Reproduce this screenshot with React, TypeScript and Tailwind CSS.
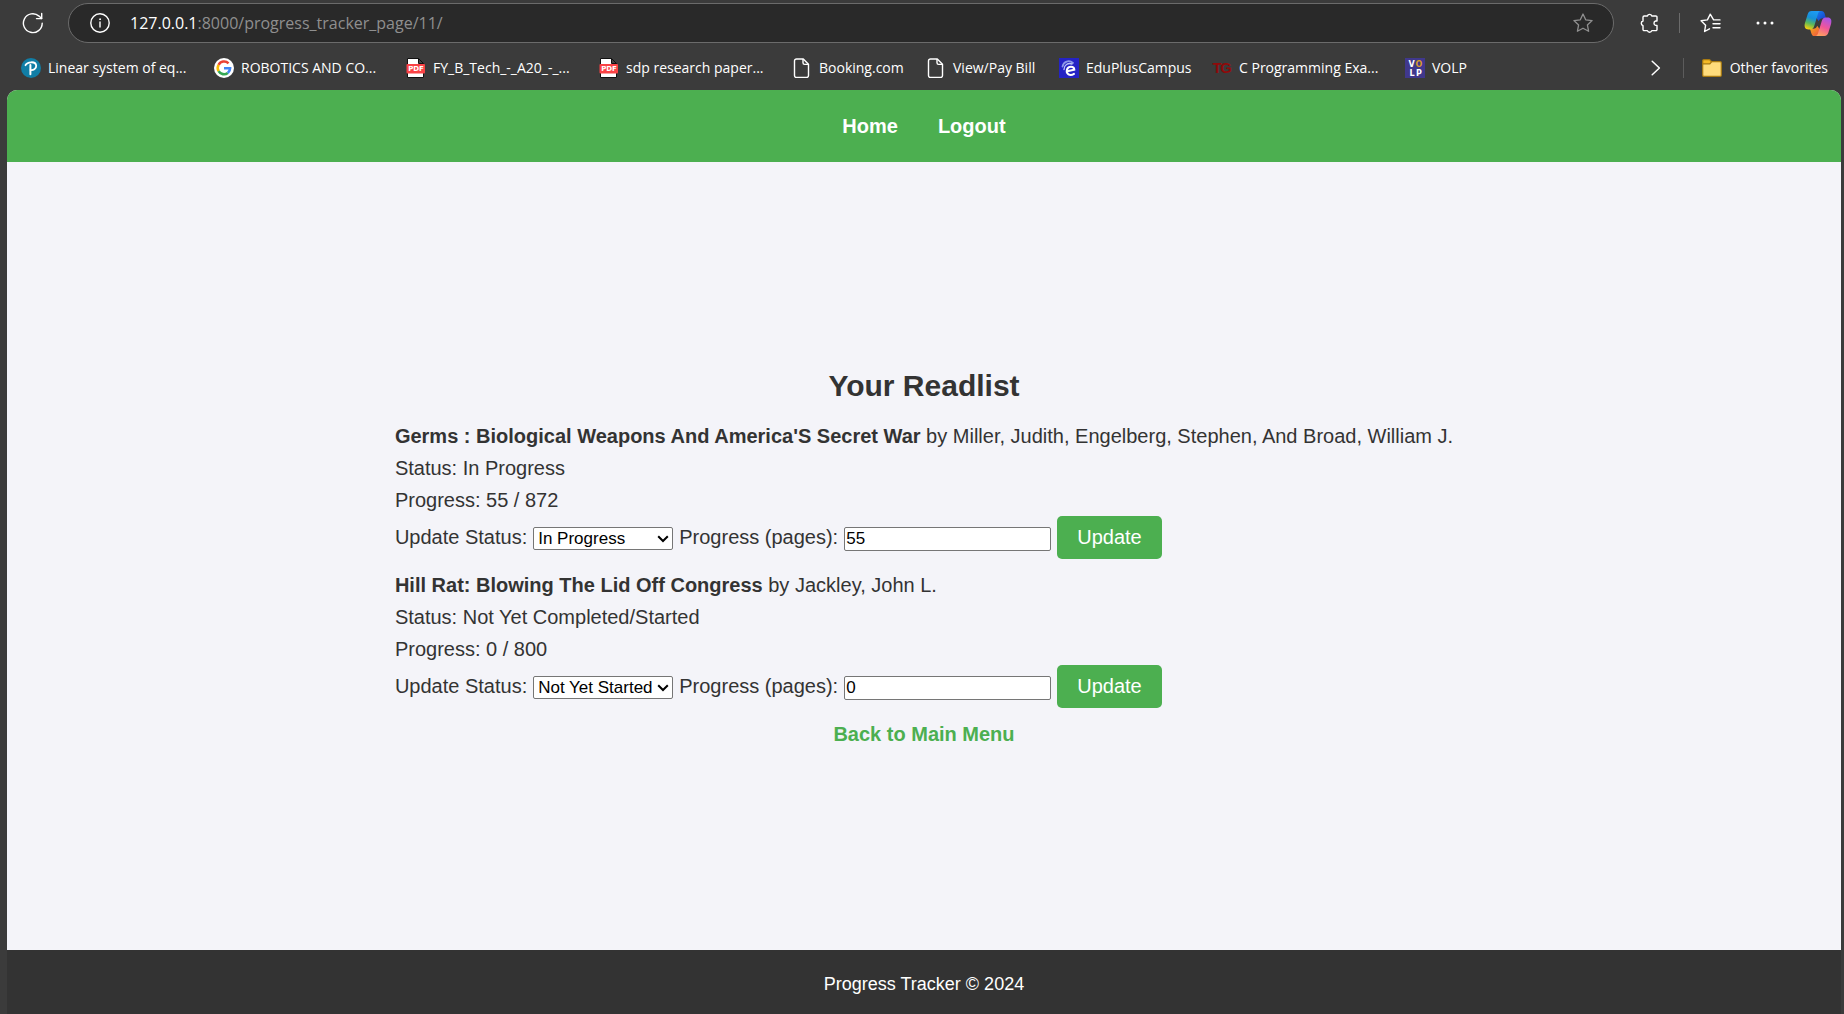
import type { ReactNode } from "react";

function ReloadIcon() {
  return (
    <svg width="22" height="22" viewBox="0 0 22 22" fill="none" stroke="#ffffff" strokeWidth="1.4" strokeLinecap="round" strokeLinejoin="round">
      <path d="M20.2 11.2a9.4 9.4 0 1 1-3.2-7.1l2.6 2.4" />
      <path d="M19.7 1.4v5.2h-5.2" />
    </svg>
  );
}

function InfoIcon() {
  return (
    <svg width="20" height="20" viewBox="0 0 20 20" fill="none" stroke="#ffffff" strokeWidth="1.4" strokeLinecap="round">
      <circle cx="10" cy="10" r="9.2" />
      <path d="M10 9v5" />
      <circle cx="10" cy="6.2" r="0.5" fill="#ffffff" strokeWidth="0.9" />
    </svg>
  );
}

function StarIcon() {
  return (
    <svg width="20" height="20" viewBox="0 0 20 20" fill="none" stroke="#8f8f8f" strokeWidth="1.3" strokeLinejoin="round">
      <path d="M10 1l2.7 5.8 6.4.8-4.7 4.3 1.2 6.4-5.6-3.1-5.6 3.1 1.2-6.4L.9 7.600l6.400-.8z" />
    </svg>
  );
}

function ExtensionsIcon() {
  return (
    <svg width="20" height="20" viewBox="0 0 20 20" fill="none" stroke="#ffffff" strokeWidth="1.4" strokeLinejoin="round">
      <path d="M5.200 3H8.400a2.300 2.300 0 0 1 4.400 0H16.800a1.200 1.200 0 0 1 1.200 1.200V8H16.600a2.300 2.300 0 0 0 0 4.400H18v4a1.200 1.200 0 0 1-1.200 1.200H12.800a2.300 2.300 0 0 1-4.400 0H5.200A1.200 1.200 0 0 1 4 16.400V12.600a2.400 2.400 0 0 1 0-4.600V4.200A1.200 1.200 0 0 1 5.200 3z" />
    </svg>
  );
}

function FavoritesIcon() {
  return (
    <svg width="21" height="20" viewBox="0 0 21 20" fill="none" stroke="#ffffff" strokeWidth="1.4" strokeLinejoin="round" strokeLinecap="round">
      <path d="M20 6.900h-6.400l-3.400-5.700-2.800 5.700-6.300.9 4.500 4.400-1 6.300 4.900-2.700" />
      <path d="M13 10.800h7M13 14.800h7" />
    </svg>
  );
}

function MoreIcon() {
  return (
    <svg width="18" height="4" viewBox="0 0 18 4" fill="#ffffff">
      <circle cx="2" cy="2" r="1.500" />
      <circle cx="9" cy="2" r="1.500" />
      <circle cx="16" cy="2" r="1.500" />
    </svg>
  );
}

function CopilotIcon() {
  return (
    <svg width="28" height="27" viewBox="0 0 28 27">
      <defs>
        <linearGradient id="cpLeft" x1="0.6" y1="0" x2="0.3" y2="1">
          <stop offset="0" stopColor="#1d9bf5" />
          <stop offset="0.4" stopColor="#1790d8" />
          <stop offset="0.7" stopColor="#5cb85a" />
          <stop offset="1" stopColor="#f2cf10" />
        </linearGradient>
        <linearGradient id="cpRight" x1="0.7" y1="0" x2="0.3" y2="1">
          <stop offset="0" stopColor="#a855e8" />
          <stop offset="0.5" stopColor="#f0559a" />
          <stop offset="1" stopColor="#ffa45c" />
        </linearGradient>
        <linearGradient id="cpTop" x1="0" y1="0" x2="1" y2="1">
          <stop offset="0" stopColor="#1487f0" />
          <stop offset="1" stopColor="#1b35c4" />
        </linearGradient>
        <linearGradient id="cpBottom" x1="0" y1="0" x2="1" y2="1">
          <stop offset="0" stopColor="#f5b017" />
          <stop offset="1" stopColor="#ee4b45" />
        </linearGradient>
      </defs>
      <path d="M13 1h4.500c1.800 0 2.600 1 3.100 2.600l1.400 4.700h-3.200c-2.400 0-3.400 1-4 3L11 6z" fill="url(#cpTop)" />
      <path d="M15 26h-4.500c-1.800 0-2.600-1-3.100-2.600L6 18.700h3.200c2.400 0 3.400-1 4-3L17 21z" fill="url(#cpBottom)" />
      <path d="M7.500 1h9.300c-1.800.2-2.500 1.500-3 3.300l-3.400 11.200c-.8 2.500-1.900 3.900-4.200 3.900H4.500C1.100 19.400 0 17 .9 13.300L3.600 4.400C4.300 2.200 5.500 1 7.500 1z" fill="url(#cpLeft)" />
      <path d="M20.500 26h-9.300c1.800-.2 2.500-1.500 3-3.300l3.400-11.200c.8-2.500 1.900-3.900 4.200-3.900h1.700c3.400 0 4.500 2.400 3.600 6.100l-2.700 8.900c-.7 2.200-1.900 3.400-3.900 3.400z" fill="url(#cpRight)" />
    </svg>
  );
}

function PearsonIcon() {
  return (
    <svg width="20" height="20" viewBox="0 0 20 20" fill="none" stroke="#ffffff" strokeLinecap="round">
      <circle cx="10" cy="10" r="10" fill="#117ea6" stroke="none" />
      <path d="M4.500 7.200C6 3.800 14.800 2.600 15.200 7.800c.2 3-3.200 4.800-5.600 4.200" strokeWidth="1.800" />
      <path d="M9.400 7v9.200" strokeWidth="2" />
    </svg>
  );
}

function GoogleIcon() {
  return (
    <svg width="20" height="20" viewBox="0 0 20 20">
      <circle cx="10" cy="10" r="10" fill="#ffffff" />
      <g fill="none" strokeWidth="2.600">
        <path d="M14.500 5.300A6.200 6.200 0 0 0 4.600 6.900" stroke="#ea4335" />
        <path d="M4.600 6.900a6.200 6.200 0 0 0 0 6.200" stroke="#fbbc05" />
        <path d="M4.600 13.100a6.200 6.200 0 0 0 9.200 1.800" stroke="#34a853" />
        <path d="M13.800 14.900a6.200 6.200 0 0 0 2.300-4.700H10" stroke="#4285f4" />
      </g>
    </svg>
  );
}

function PdfIcon() {
  return (
    <svg width="20" height="20" viewBox="0 0 20 20">
      <path d="M1.500.5h11l5 5v14h-16z" fill="#ffffff" stroke="#111111" />
      <path d="M12.500.5v5h5z" fill="#444444" stroke="#111111" />
      <rect x="0.500" y="6" width="18.500" height="9.500" rx="1" fill="#fa4245" />
      <text x="10" y="13.400" textAnchor="middle" fontSize="7" fontWeight="700" fill="#ffffff" className="font-['DejaVu_Sans',sans-serif]">PDF</text>
    </svg>
  );
}

function PageIcon() {
  return (
    <svg width="20" height="20" viewBox="0 0 20 20" fill="none" stroke="#ffffff" strokeWidth="1.400" strokeLinejoin="round">
      <path d="M4.500 1h6.800l5.200 5.200v11.300a2 2 0 0 1-2 2h-10a2 2 0 0 1-2-2V3a2 2 0 0 1 2-2z" />
      <path d="M11 1v3.800a1.600 1.600 0 0 0 1.600 1.600h3.900" />
    </svg>
  );
}

function EduPlusIcon() {
  return (
    <svg width="20" height="20" viewBox="0 0 20 20" fill="none" strokeLinecap="round">
      <rect width="20" height="20" fill="#2523c4" />
      <path d="M3.500 8.500C4.500 3.500 10 1.500 14 5" stroke="#8d98e8" strokeWidth="1.800" />
      <path d="M5 11.500C5 7 9 4.500 13 6" stroke="#b9c3f4" strokeWidth="1.400" />
      <path d="M8.300 13.200l7-1.600C15 8 9.500 7.800 8 11.500c-1.400 4.500 3 6.800 7 4.400" stroke="#ffffff" strokeWidth="2" />
    </svg>
  );
}

function TgIcon() {
  return (
    <svg width="20" height="20" viewBox="0 0 20 20" fontSize="15" fontWeight="700" textAnchor="middle" fill="#8f0a0a" className="font-['Liberation_Sans',sans-serif]">
      <text x="5" y="15">T</text>
      <text x="14" y="15">G</text>
    </svg>
  );
}

function VolpIcon() {
  return (
    <svg width="20" height="20" viewBox="0 0 20 20" fontSize="8" fontWeight="700" textAnchor="middle" className="font-['DejaVu_Sans',sans-serif]">
      <rect width="20" height="20" fill="#40388c" />
      <text x="6.500" y="9" fill="#ffffff">V</text>
      <text x="14" y="9" fill="#d99a2b">O</text>
      <text x="7" y="18" fill="#ffffff">L</text>
      <text x="14" y="18" fill="#ffffff">P</text>
    </svg>
  );
}

function FolderIcon() {
  return (
    <svg width="20" height="18" viewBox="0 0 20 18" strokeLinejoin="round">
      <path d="M.7 5V1.800A1.100 1.100 0 0 1 1.800.7h5.400c.5 0 .8.200 1.100.6l1 1.200v2.500z" fill="#f5b926" stroke="#a87a12" strokeWidth="1.200" />
      <path d="M.7 5h6.500c.5 0 .8-.2 1.100-.6l1-1.200c.2-.4.600-.5 1-.5h7.900a1.100 1.100 0 0 1 1.100 1.100v12.400a1.100 1.100 0 0 1-1.100 1.100H1.800a1.100 1.100 0 0 1-1.100-1.100z" fill="#ffdc7c" stroke="#a87a12" strokeWidth="1.200" />
    </svg>
  );
}

function ChevronRight() {
  return (
    <svg width="10" height="16" viewBox="0 0 10 16" fill="none" stroke="#ffffff" strokeWidth="1.500" strokeLinecap="round" strokeLinejoin="round">
      <path d="M1.200 1.200L8.400 8l-7.200 6.800" />
    </svg>
  );
}

type Favorite = { label: string; width: string; icon: ReactNode };

const favorites: Favorite[] = [
  { label: "Linear system of eq...", width: "w-[193px]", icon: <PearsonIcon /> },
  { label: "ROBOTICS AND CO...", width: "w-[192px]", icon: <GoogleIcon /> },
  { label: "FY_B_Tech_-_A20_-_...", width: "w-[193px]", icon: <PdfIcon /> },
  { label: "sdp research paper...", width: "w-[193px]", icon: <PdfIcon /> },
  { label: "Booking.com", width: "w-[134px]", icon: <PageIcon /> },
  { label: "View/Pay Bill", width: "w-[133px]", icon: <PageIcon /> },
  { label: "EduPlusCampus", width: "w-[153px]", icon: <EduPlusIcon /> },
  { label: "C Programming Exa...", width: "w-[193px]", icon: <TgIcon /> },
  { label: "VOLP", width: "w-[80px]", icon: <VolpIcon /> },
];

function BrowserChrome() {
  return (
    <div className="font-['Open_Sans','Noto_Sans',sans-serif] text-white">
      <div className="flex h-[46px] items-center pr-3 pl-[22px]">
        <button type="button" aria-label="Reload" className="shrink-0">
          <ReloadIcon />
        </button>
        <div className="ml-6 flex h-10 flex-1 items-center rounded-full border border-[#6b6b6b] bg-[#292929] pr-5 pl-[21px]">
          <button type="button" aria-label="Site information">
            <InfoIcon />
          </button>
          <div className="ml-5 flex-1 text-base whitespace-nowrap text-[#8f8f8f]">
            <span className="text-white">127.0.0.1</span>:8000/progress_tracker_page/11/
          </div>
          <button type="button" aria-label="Add to favorites">
            <StarIcon />
          </button>
        </div>
        <button type="button" aria-label="Extensions" className="ml-[25px]">
          <ExtensionsIcon />
        </button>
        <div className="ml-5 h-5 w-px bg-[#6b6b6b]" />
        <button type="button" aria-label="Favorites" className="ml-5">
          <FavoritesIcon />
        </button>
        <button type="button" aria-label="Settings and more" className="ml-[35px] flex h-5 items-center">
          <MoreIcon />
        </button>
        <button type="button" aria-label="Copilot" className="ml-[30px]">
          <CopilotIcon />
        </button>
      </div>
      <div className="flex h-11 items-center pr-4 pl-[21px] text-sm whitespace-nowrap">
        {favorites.map((f) => (
          <a key={f.label} href="#" className={`flex shrink-0 items-center gap-[7px] ${f.width}`}>
            <span className="w-5 shrink-0">{f.icon}</span>
            {f.label}
          </a>
        ))}
        <button type="button" aria-label="More favorites" className="ml-auto">
          <ChevronRight />
        </button>
        <div className="mr-[18px] ml-[22px] h-5 w-px shrink-0 bg-[#5c5c5c]" />
        <button type="button" className="flex items-center gap-2">
          <FolderIcon />
          Other favorites
        </button>
      </div>
    </div>
  );
}

type Book = {
  id: string;
  title: string;
  author: string;
  status: string;
  choice: string;
  read: number;
  total: number;
};

const books: Book[] = [
  {
    id: "germs",
    title: "Germs : Biological Weapons And America'S Secret War",
    author: "Miller, Judith, Engelberg, Stephen, And Broad, William J.",
    status: "In Progress",
    choice: "In Progress",
    read: 55,
    total: 872,
  },
  {
    id: "hill-rat",
    title: "Hill Rat: Blowing The Lid Off Congress",
    author: "Jackley, John L.",
    status: "Not Yet Completed/Started",
    choice: "Not Yet Started",
    read: 0,
    total: 800,
  },
];

function BookEntry({ book }: { book: Book }) {
  return (
    <li className="mb-2.5">
      <p>
        <strong>{book.title}</strong> by {book.author}
      </p>
      <p>Status: {book.status}</p>
      <p>
        Progress: {book.read} / {book.total}
      </p>
      <form className="flex items-center gap-1.5" onSubmit={(e) => e.preventDefault()}>
        <label htmlFor={`${book.id}-status`} className="pb-0.5">
          Update Status:
        </label>
        <div className="relative mt-0.5">
          <select
            id={`${book.id}-status`}
            defaultValue={book.choice}
            className="block h-[23px] w-[140px] appearance-none rounded-[2px] border border-[#767676] bg-white pl-1 text-[17px] leading-5 text-black"
          >
            <option>Not Yet Started</option>
            <option>In Progress</option>
            <option>Completed</option>
          </select>
          <svg className="pointer-events-none absolute top-2 right-1" width="12" height="8" viewBox="0 0 12 8" fill="none" stroke="#000000" strokeWidth="2">
            <path d="M1.200 1.200L6 6l4.800-4.800" />
          </svg>
        </div>
        <label htmlFor={`${book.id}-pages`} className="pb-0.5">
          Progress (pages):
        </label>
        <input
          id={`${book.id}-pages`}
          type="text"
          inputMode="numeric"
          defaultValue={book.read}
          className="mt-0.5 h-6 w-[207px] rounded-[2px] border border-[#767676] bg-white px-px text-[17px] leading-5 text-black"
        />
        <button type="submit" className="h-[43px] rounded-[5px] bg-[#4caf50] px-5 pb-0.5 text-white">
          Update
        </button>
      </form>
    </li>
  );
}

export default function App() {
  return (
    <div className="flex min-h-screen flex-col bg-[#3b3b3b]">
      <BrowserChrome />
      <div className="mr-[3px] ml-[7px] flex flex-1 flex-col overflow-hidden rounded-t-[10px] bg-[#f4f4f9] font-['Liberation_Sans',Arial,sans-serif] text-xl leading-8 text-[#333333]">
        <nav className="flex h-[72px] items-center justify-center gap-10 bg-[#4caf50] font-bold text-white">
          <a href="#">Home</a>
          <a href="#">Logout</a>
        </nav>
        <main className="flex flex-1 flex-col items-center justify-center">
          <h1 className="mb-2.5 text-[30px] leading-[48px] font-bold">Your Readlist</h1>
          <ul>
            {books.map((book) => (
              <BookEntry key={book.id} book={book} />
            ))}
          </ul>
          <a href="#" className="font-bold text-[#4caf50]">
            Back to Main Menu
          </a>
        </main>
        <footer className="flex h-16 items-center justify-center bg-[#333333] pt-1 text-lg text-white">
          Progress Tracker © 2024
        </footer>
      </div>
    </div>
  );
}
